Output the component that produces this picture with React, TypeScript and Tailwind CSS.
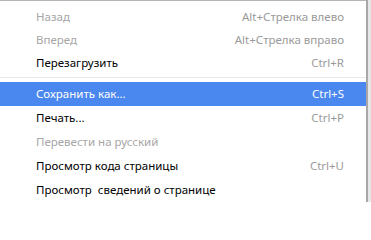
const items: { label?: string; shortcut?: string; disabled?: boolean; active?: boolean; sep?: boolean }[] = [
  { label: "Назад", shortcut: "Alt+Стрелка влево", disabled: true },
  { label: "Вперед", shortcut: "Alt+Стрелка вправо", disabled: true },
  { label: "Перезагрузить", shortcut: "Ctrl+R" },
  { sep: true },
  { label: "Сохранить как...", shortcut: "Ctrl+S", active: true },
  { label: "Печать...", shortcut: "Ctrl+P" },
  { label: "Перевести на русский", disabled: true },
  { label: "Просмотр кода страницы", shortcut: "Ctrl+U" },
  { label: "Просмотр  сведений о странице" },
];

export default function App() {
  return (
    <div
      className="flex h-[202px] w-[371px] overflow-hidden bg-[#ebebeb] text-[11.5px]"
      style={{ fontFamily: '"Noto Sans", "Open Sans", sans-serif' }}
    >
      <div className="flex w-[366px] flex-col border-t border-[#b4b4b4] bg-white pt-[4px]">
        {items.map((it, i) =>
          it.sep ? (
            <div key={i} className="flex h-[8px] flex-col pt-[3px]">
              <div className="h-px bg-[#e9e9e9]" />
            </div>
          ) : (
            <div
              key={i}
              className={
                "flex items-center justify-between pl-[36px] pr-[22px] " +
                (i < 3 ? "h-[23px] " : "h-[24px] ") +
                (it.active ? "bg-[#4a87ee] text-white" : it.disabled ? "text-[#a6a6a6]" : "text-black")
              }
            >
              <span className="whitespace-pre">{it.label}</span>
              {it.shortcut && (
                <span className={it.active ? "text-white" : "text-[#9a9a9a]"}>{it.shortcut}</span>
              )}
            </div>
          ),
        )}
      </div>
      <div className="w-[2px] bg-[#a8a8a8]" />
      <div className="w-[3px] bg-[#e6e6e6]" />
    </div>
  );
}
